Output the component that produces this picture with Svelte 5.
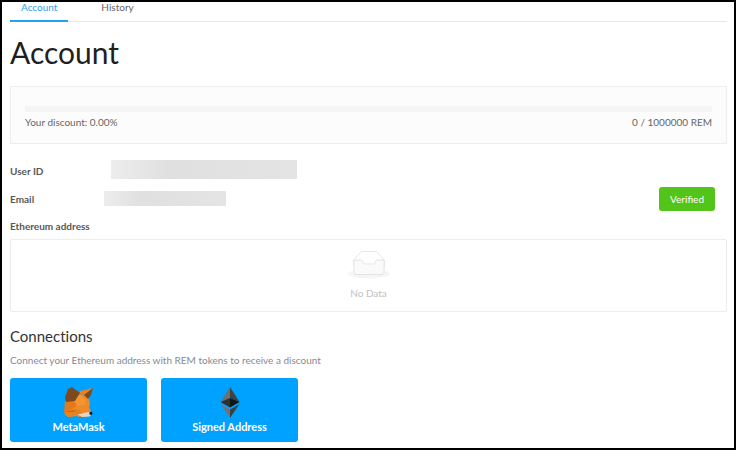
<script lang="ts">
	let activeTab = $state('Account');

	const tabs = ['Account', 'History'];
	const tokens = 0;
	const goal = 1000000;

	let discount = $derived(((tokens / goal) * 100).toFixed(2));
</script>

<svelte:head>
	<title>Account</title>
</svelte:head>

<div class="page">
	<div class="tabs" role="tablist">
		{#each tabs as tab}
			<button
				class="tab"
				class:active={activeTab === tab}
				role="tab"
				aria-selected={activeTab === tab}
				onclick={() => (activeTab = tab)}
			>
				{tab}
			</button>
		{/each}
	</div>

	<main>
		<h1>Account</h1>

		<section class="discount">
			<div class="track">
				<div class="bar" style="width: {(tokens / goal) * 100}%"></div>
			</div>
			<div class="discount-row">
				<span>Your discount: {discount}%</span>
				<span>{tokens} / {goal} REM</span>
			</div>
		</section>

		<dl class="details">
			<div class="row">
				<dt>User ID</dt>
				<dd><span class="hidden-value user-id"></span></dd>
			</div>
			<div class="row">
				<dt>Email</dt>
				<dd><span class="hidden-value email"></span></dd>
				<dd class="status"><button class="verified">Verified</button></dd>
			</div>
		</dl>

		<section>
			<h2 class="label">Ethereum address</h2>
			<div class="empty">
				<svg width="42" height="28" viewBox="0 0 64 41" aria-hidden="true">
					<ellipse cx="32" cy="34" rx="32" ry="7" fill="#f5f5f5" />
					<g fill="#fff" stroke="#d9d9d9">
						<path
							d="M55 12.76L44.854 1.258C44.367.474 43.656 0 42.907 0H21.093c-.749 0-1.46.474-1.947 1.257L9 12.761V22h46v-9.24z"
						/>
						<path
							d="M41.613 15.931c0-1.605.994-2.93 2.227-2.931H55v18.137C55 33.26 53.68 35 52.05 35h-40.1C10.32 35 9 33.259 9 31.137V13h11.16c1.233 0 2.227 1.323 2.227 2.928v.022c0 1.605 1.005 2.901 2.237 2.901h14.752c1.232 0 2.237-1.308 2.237-2.913v-.007z"
							fill="#fafafa"
						/>
					</g>
				</svg>
				<p>No Data</p>
			</div>
		</section>

		<section class="connections">
			<h2>Connections</h2>
			<p>Connect your Ethereum address with REM tokens to receive a discount</p>

			<div class="buttons">
				<button class="connect">
					<svg width="32" height="32" viewBox="0 0 32 32" aria-hidden="true">
						<path
							fill="#f08a24"
							d="M2 15l9-1 5-6 6 1 4 4 1 5-1 3 3 7-2 2-10 1-4-1-8 1-3-4z"
						/>
						<path fill="#e2791d" d="M2 15l9 0 3 4-5 4-8 3z" />
						<path fill="#f6952f" d="M11 15l5-7 7 6-2 5-6 1z" />
						<path fill="#e8811f" d="M1 26l9-3 7 1 2 4-5 1-7 2-4-1z" />
						<path fill="#cf6a19" d="M1 26l9-2 4 1-4 1z" />
						<path fill="#7d4a20" d="M9 1l8 6-5 8-9 1-1-5 3-8z" />
						<path fill="#e8821f" d="M17 5l13-3-7 7-6-1z" />
						<path fill="#7d4a20" d="M30 2l-9 7 4 4 3-4z" />
						<path fill="#a6a07a" d="M16 19.5l3-1 2 1.5-3 .5z" />
						<path fill="#e3d4c7" d="M14.5 28.5l11-2.5 3 2.5-2 2-7 .5z" />
						<path fill="#161616" d="M26.5 26.5l2-1 1 2-1 1.5-2-.5z" />
					</svg>
					MetaMask
				</button>
				<button class="connect">
					<svg width="32" height="32" viewBox="0 0 32 32" aria-hidden="true">
						<path fill="#6f6f6e" d="M16 1v11l-9.500 4z" />
						<path fill="#414141" d="M16 1v11l9.500 4z" />
						<path fill="#2f3030" d="M16 12v9.500L6.500 16z" />
						<path fill="#151515" d="M16 12v9.500l9.500-5.500z" />
						<path fill="#737373" d="M6.500 18l9.500 5.500V32z" />
						<path fill="#3f3f3f" d="M25.500 18L16 23.500V32z" />
					</svg>
					Signed Address
				</button>
			</div>
		</section>
	</main>
</div>

<style>
	:global(body) {
		background: #fff;
	}

	.page {
		box-sizing: border-box;
		min-height: 100vh;
		padding: 0 7px 0 8px;
		border: 2px solid #000;
		background: #fff;
		color: #666;
		font-family: Lato, 'Open Sans', sans-serif;
		font-size: 10px;
		line-height: 16px;
	}

	button {
		border: none;
		font: inherit;
		cursor: pointer;
	}

	.tabs {
		display: flex;
		gap: 22px;
		border-bottom: 1px solid #e8e8e8;
	}

	.tab {
		margin-bottom: -1px;
		padding: 0 11px 7px;
		border-bottom: 2px solid transparent;
		background: none;
		color: #666;
		line-height: 11px;
	}

	.tab.active {
		border-bottom-color: #26a0ee;
		color: #2f9fee;
	}

	h1 {
		margin: 9px 0 13px;
		color: #1f1f1f;
		font-size: 30px;
		font-weight: 400;
		line-height: 42px;
	}

	.discount {
		padding: 19px 14px 13px;
		border: 1px solid #ededed;
		background: #fcfcfc;
	}

	.track {
		height: 6px;
		margin-bottom: 2px;
		background: #f5f5f5;
	}

	.bar {
		height: 100%;
		background: #1890ff;
	}

	.discount-row {
		display: flex;
		justify-content: space-between;
	}

	.details {
		margin: 13px 0 6px;
	}

	.row {
		display: flex;
		align-items: center;
		min-height: 28px;
	}

	.row + .row {
		min-height: 27px;
	}

	dt,
	.label {
		color: #595959;
		font-size: 10px;
		font-weight: 700;
	}

	dt {
		width: 94px;
	}

	dd {
		margin: 0;
	}

	.hidden-value {
		display: block;
		background: linear-gradient(90deg, #ededed, #e0e0e0 30%, #e4e4e4);
	}

	.user-id {
		width: 186px;
		height: 19px;
		margin: 0 0 4px 7px;
	}

	.email {
		width: 122px;
		height: 15px;
	}

	.status {
		margin-left: auto;
	}

	.verified {
		display: block;
		margin-right: 12px;
		padding: 4px 11px;
		border-radius: 3px;
		background: #52c41a;
		color: #fff;
	}

	.label {
		margin: 0 0 5px;
	}

	.empty {
		padding: 11px 0 10px;
		border: 1px solid #ececec;
		border-radius: 2px;
		color: #bfbfbf;
		text-align: center;
	}

	.empty svg {
		display: block;
		margin: 0 auto 6px;
	}

	.empty p {
		margin: 0;
	}

	.connections h2 {
		margin: 14px 0 6px;
		color: #333;
		font-size: 15px;
		font-variant-ligatures: none;
		font-weight: 400;
		line-height: 20px;
	}

	.connections p {
		margin: 0 0 10px;
		color: #868a94;
	}

	.buttons {
		display: flex;
		flex-wrap: wrap;
		gap: 14px;
	}

	.connect {
		display: flex;
		flex-direction: column;
		align-items: center;
		gap: 1px;
		width: 137px;
		padding: 8px 0 7px;
		border-radius: 3px;
		background: #00a2ff;
		color: #fff;
		font-size: 11px;
		font-weight: 700;
	}
</style>
